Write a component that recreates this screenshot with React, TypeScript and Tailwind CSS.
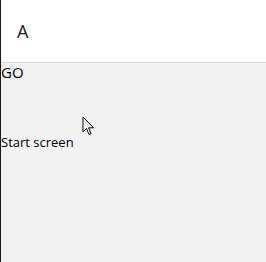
export default function App() {
  return (
    <div
      className="relative flex h-[262px] w-[266px] flex-col border-l border-[#1a1a1a] bg-[#f2f2f2] text-black"
      style={{ fontFamily: '"Segoe UI", "Open Sans", sans-serif' }}
    >
      <div className="flex h-[63px] shrink-0 items-center border-b border-[#d9d9d9] bg-white pl-[16px]">
        <span className="text-[18px] font-medium leading-none text-[#1a1a1a]">A</span>
      </div>
      <div className="flex flex-col">
        <div className="text-[15px] leading-[19px]">GO</div>
        <div className="mt-[51px] text-[13px] leading-[18px]">Start screen</div>
      </div>
      <svg
        className="absolute left-[81px] top-[116px]"
        width="13"
        height="21"
        viewBox="0 0 13 21"
      >
        <path
          d="M1 1 L1 16 L4.5 12.5 L7 18.5 L9 17.6 L6.6 11.8 L11.5 11.8 Z"
          fill="#fff"
          stroke="#000"
          strokeWidth="1"
          strokeLinejoin="miter"
        />
      </svg>
    </div>
  );
}
